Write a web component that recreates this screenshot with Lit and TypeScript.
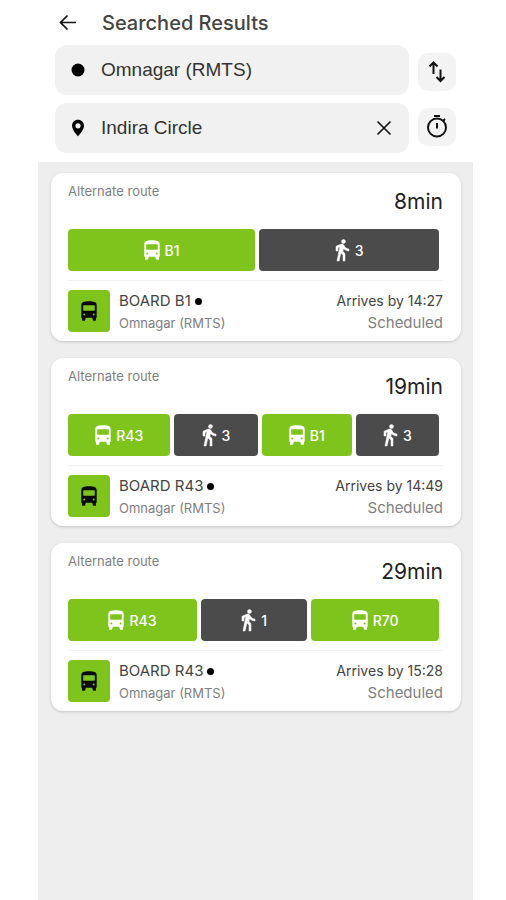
import { LitElement, html, css } from "lit";
import { customElement, property } from "lit/decorators.js";

type Leg = { kind: "bus" | "walk"; label: string };
type Route = { duration: string; legs: Leg[]; board: string; stop: string; arrival: string };

const bus = (label: string): Leg => ({ kind: "bus", label });
const walk = (label: string): Leg => ({ kind: "walk", label });

const routes: Route[] = [
  { duration: "8min", legs: [bus("B1"), walk("3")], board: "B1", stop: "Omnagar (RMTS)", arrival: "14:27" },
  { duration: "19min", legs: [bus("R43"), walk("3"), bus("B1"), walk("3")], board: "R43", stop: "Omnagar (RMTS)", arrival: "14:49" },
  { duration: "29min", legs: [bus("R43"), walk("1"), bus("R70")], board: "R43", stop: "Omnagar (RMTS)", arrival: "15:28" },
];

const busIcon = html`<svg viewBox="0 0 16 20" aria-hidden="true"><path fill-rule="evenodd" d="M.3 4C.3 1.200 3 .3 8 .3s7.700.9 7.700 3.700v12c0 .6-.3 1-.8 1.200v2c0 .4-.2.600-.6.600h-1.800c-.3 0-.5-.2-.6-.5L11.200 16.800H4.800L4.100 19.300c-.1.300-.3.500-.6.500H1.700c-.4 0-.6-.2-.6-.6v-2c-.5-.2-.8-.6-.8-1.200zM3.200 4.200c-.6 0-1 .4-1 1v3.600c0 .6.4 1 1 1h9.600c.6 0 1-.4 1-1V5.200c0-.6-.4-1-1-1zM3.300 12.500a1 1 0 1 0 0 2 1 1 0 0 0 0-2zm9.400 0a1 1 0 1 0 0 2 1 1 0 0 0 0-2z"/></svg>`;
const walkIcon = html`<svg viewBox="5 1 15 23" aria-hidden="true"><path d="M13.500 5.500c1.100 0 2-.9 2-2s-.9-2-2-2-2 .9-2 2 .9 2 2 2zM9.800 8.900 7 23h2.100l1.800-8 2.100 2v6h2v-7.500l-2.100-2 .6-3C14.800 12 16.800 13 19 13v-2c-1.900 0-3.500-1-4.300-2.400l-1-1.600c-.4-.6-1-1-1.700-1-.3 0-.5.1-.8.1L6 8.300V13h2V9.600l1.800-.7" stroke="currentColor" stroke-width=".5"/></svg>`;

@customElement("route-card")
class RouteCard extends LitElement {
  @property({ attribute: false }) route!: Route;

  static styles = css`
    :host { display: block; }
    .card {
      background: #fff;
      border-radius: 12px;
      box-shadow: 0 1px 3px rgba(0, 0, 0, 0.18);
      padding: 10px 18px 8px 17px;
      color: #444;
    }
    .top { display: flex; justify-content: space-between; height: 46px; }
    .kind { font-size: 13px; line-height: 16px; color: #808080; }
    .duration { font-size: 21px; line-height: 24px; padding-top: 7px; color: #222; margin: 0; font-weight: 400; }
    .legs { display: flex; gap: 4px; padding-right: 4px; }
    .leg {
      flex: 1 1 auto;
      height: 42px;
      border-radius: 4px;
      display: flex;
      align-items: center;
      justify-content: center;
      gap: 5px;
      color: #fff;
      font-size: 14px;
      font-weight: 500;
    }
    svg { width: 16px; height: 20px; fill: currentColor; }
    .walk svg { width: 15px; height: 23px; }
    .bus { background: #7fc41c; }
    .walk { background: #4b4b4b; }
    .details {
      display: flex;
      gap: 9px;
      margin-top: 9px;
      padding-top: 9px;
      border-top: 1px solid #f3f3f3;
    }
    .badge {
      width: 42px;
      height: 42px;
      border-radius: 4px;
      display: flex;
      align-items: center;
      justify-content: center;
      color: #0a0a0a;
    }
    .column { display: flex; flex-direction: column; height: 43px; }
    .times { margin-left: auto; text-align: right; }
    .line { font-size: 14px; line-height: 22px; }
    .name { font-size: 15px; line-height: 22px; display: flex; align-items: center; gap: 4px; }
    .dot { width: 7px; height: 7px; border-radius: 50%; background: #000; }
    .stop { font-size: 13px; line-height: 22px; color: #808080; }
    .status { font-size: 15px; line-height: 22px; color: #808080; }
  `;

  render() {
    const r = this.route;
    return html`<article class="card">
      <div class="top"><span class="kind">Alternate route</span><h2 class="duration">${r.duration}</h2></div>
      <div class="legs">
        ${r.legs.map((l) => html`<div class="leg ${l.kind}">${l.kind === "bus" ? busIcon : walkIcon}<span>${l.label}</span></div>`)}
      </div>
      <div class="details">
        <div class="badge bus">${busIcon}</div>
        <div class="column">
          <span class="name">BOARD ${r.board}<i class="dot"></i></span>
          <span class="stop">${r.stop}</span>
        </div>
        <div class="column times">
          <span class="line">Arrives by ${r.arrival}</span>
          <span class="status">Scheduled</span>
        </div>
      </div>
    </article>`;
  }
}

@customElement("app-root")
class AppRoot extends LitElement {
  static styles = css`
    :host {
      display: flex;
      flex-direction: column;
      box-sizing: border-box;
      min-height: 100vh;
      padding: 0 33px 0 38px;
      background: #fff;
      font-family: Inter, "Liberation Sans", sans-serif;
      color: #444;
    }
    button { border: 0; padding: 0; background: none; color: #111; display: flex; align-items: center; justify-content: center; }
    svg { fill: none; stroke: currentColor; stroke-width: 2; }
    .header { display: flex; align-items: center; gap: 24px; height: 45px; padding-left: 20px; }
    .back svg { width: 20px; height: 20px; }
    .title { margin: 0; font-size: 20px; line-height: 24px; font-weight: 500; }
    .search { display: flex; align-items: center; gap: 9px; padding: 0 17px 9px; }
    .fields { flex: 1; min-width: 0; display: flex; flex-direction: column; gap: 8px; }
    .field {
      display: flex;
      align-items: center;
      gap: 14px;
      height: 50px;
      padding: 0 15px 0 14px;
      border-radius: 12px;
      background: #f1f1f1;
      color: #000;
    }
    .mark { width: 18px; height: 18px; flex: none; fill: currentColor; stroke: none; }
    .input {
      flex: 1;
      min-width: 0;
      border: 0;
      padding: 0;
      background: none;
      font-family: "Liberation Sans", sans-serif;
      font-size: 19px;
      line-height: 24px;
      color: #333;
      outline: none;
    }
    .clear svg { width: 20px; height: 20px; }
    .actions { display: flex; flex-direction: column; gap: 17px; }
    .action { width: 38px; height: 38px; border-radius: 10px; background: #f3f3f3; }
    .action svg { width: 24px; height: 24px; }
    .results { flex: 1; display: flex; flex-direction: column; gap: 17px; padding: 11px 12px 17px 13px; background: #eee; }
  `;

  render() {
    return html`
      <header class="header">
        <button class="back" aria-label="Back">
          <svg viewBox="0 0 20 20"><path d="M18 9.500H3M9.500 2.500 2.500 9.500l7 7" stroke-width="1.700" /></svg>
        </button>
        <h1 class="title">Searched Results</h1>
      </header>
      <section class="search">
        <div class="fields">
          <label class="field">
            <svg class="mark" viewBox="0 0 18 18"><circle cx="9" cy="9" r="6.500" /></svg>
            <input class="input" aria-label="From" .value=${"Omnagar (RMTS)"} />
          </label>
          <div class="field">
            <svg class="mark" viewBox="0 0 18 18"><path fill-rule="evenodd" d="M9 .8C5.500.8 3 3.400 3 6.800c0 4.200 6 10.600 6 10.600s6-6.400 6-10.600c0-3.400-2.500-6-6-6zm0 3.400a2.600 2.600 0 1 1 0 5.200 2.600 2.600 0 0 1 0-5.200z" /></svg>
            <input class="input" aria-label="To" .value=${"Indira Circle"} />
            <button class="clear" aria-label="Clear">
              <svg viewBox="0 0 20 20"><path d="m3.500 3.500 13 13m0-13-13 13" stroke-width="1.600" /></svg>
            </button>
          </div>
        </div>
        <div class="actions">
          <button class="action" aria-label="Swap">
            <svg viewBox="0 0 24 24"><path d="M8.500 14V2.500M4.500 6.500l4-4 4 4M15.500 9.500v11M11.500 17l4 4 4-4" /></svg>
          </button>
          <button class="action" aria-label="Departure time">
            <svg viewBox="0 0 24 24"><circle cx="12" cy="12.500" r="9" /><path d="M9 1h6M12 8v5.500M18 6l2-2" /></svg>
          </button>
        </div>
      </section>
      <main class="results">${routes.map((r) => html`<route-card .route=${r}></route-card>`)}</main>
    `;
  }
}
